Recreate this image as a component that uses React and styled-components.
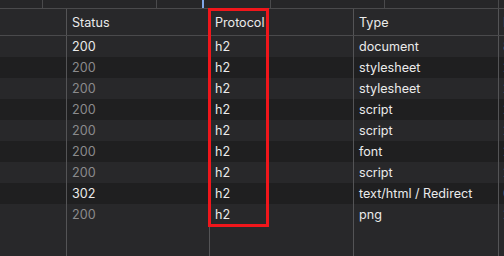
import styled, { createGlobalStyle } from 'styled-components'

const Global = createGlobalStyle`
  html, body {
    margin: 0;
    padding: 0;
    background: #28282a;
    overflow: hidden;
  }
  body {
    font-family: Inter, "Noto Sans", "Liberation Sans", sans-serif;
  }
`;

const Page = styled.div`
  position: relative;
  width: 504px;
  height: 256px;
  display: flex;
  flex-direction: column;
  background: #28282a;
  overflow: hidden;
`;

// timeline ruler on top
const Ruler = styled.div`
  position: relative;
  display: flex;
  height: 8px;
  flex: none;
  border-bottom: 1px solid #4a4a4c;
  background: #262628;
  padding-left: 42px;
`;

const Tick = styled.div`
  flex: none;
  width: 114px;
  border-left: 1px solid #4a4a4c;
  box-sizing: border-box;
`;

const Marker = styled.div`
  position: absolute;
  left: 202px;
  top: 0;
  width: 2px;
  height: 8px;
  background: #7fa6e8;
`;

const Row = styled.div`
  display: grid;
  grid-template-columns: 67px 143px 144px 145px 1fr;
  flex: none;
  height: ${p => p.$h}px;
  background: ${p => (p.$dark ? '#1f1f20' : '#28282a')};
  border-bottom: ${p => (p.$head ? '1px solid #4a4a4c' : 'none')};
`;

const Filler = styled(Row)`
  flex: 1;
  height: auto;
`;

const Cell = styled.div`
  display: flex;
  align-items: center;
  padding-left: 5px;
  border-right: 1px solid #545456;
  box-sizing: border-box;
  overflow: hidden;
  white-space: nowrap;
  font-size: 12.6px;
  color: ${p => (p.$dim ? '#8b8b8d' : '#ebebeb')};
  &:last-child {
    border-right: none;
    padding-left: 4px;
  }
`;

const Highlight = styled.div`
  position: absolute;
  left: 208px;
  top: 8px;
  width: 61px;
  height: 219px;
  border: 3px solid #f0161b;
  box-sizing: border-box;
  pointer-events: none;
`;

const rows = [
  { status: '200', dim: false, type: 'document', size: '8.4 kB' },
  { status: '200', dim: true, type: 'stylesheet', size: '2.1 kB' },
  { status: '200', dim: true, type: 'stylesheet', size: '2.3 kB' },
  { status: '200', dim: true, type: 'script', size: '2.6 kB' },
  { status: '200', dim: true, type: 'script', size: '2.0 kB' },
  { status: '200', dim: true, type: 'font', size: '2.8 kB' },
  { status: '200', dim: true, type: 'script', size: '2.2 kB' },
  { status: '302', dim: false, type: 'text/html / Redirect', size: '0 B' },
  { status: '200', dim: true, type: 'png', size: '2.5 kB' },
]

export default function App() {
  return (
    <>
      <Global />
      <Page>
        <Ruler>
          {[0, 1, 2, 3, 4].map(i => <Tick key={i} />)}
          <Marker />
        </Ruler>
        <Row $h={26} $head>
          <Cell />
          <Cell>Status</Cell>
          <Cell>Protocol</Cell>
          <Cell>Type</Cell>
          <Cell $dim>Decoded Size</Cell>
        </Row>
        {rows.map((r, i) => (
          <Row key={i} $h={21} $dark={i % 2 === 1}>
            <Cell />
            <Cell $dim={r.dim}>{r.status}</Cell>
            <Cell>h2</Cell>
            <Cell>{r.type}</Cell>
            <Cell $dim>{r.size}</Cell>
          </Row>
        ))}
        <Filler>
          <Cell />
          <Cell />
          <Cell />
          <Cell />
          <Cell />
        </Filler>
        <Highlight />
      </Page>
    </>
  )
}
